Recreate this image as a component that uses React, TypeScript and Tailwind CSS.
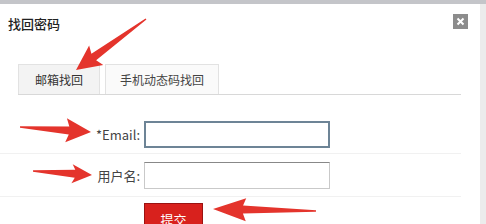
import React from "react";

type Pt = [number, number];

// tapered red annotation arrow, tail -> tip
const arrowPoints = (tail: Pt, tip: Pt, hl: number, hw: number, w0: number, w1: number) => {
  const dx = tip[0] - tail[0];
  const dy = tip[1] - tail[1];
  const len = Math.hypot(dx, dy);
  const ux = dx / len;
  const uy = dy / len;
  const nx = -uy;
  const ny = ux;
  const bx = tip[0] - ux * hl;
  const by = tip[1] - uy * hl;
  const pts: Pt[] = [
    [tail[0] + (nx * w0) / 2, tail[1] + (ny * w0) / 2],
    [bx + (nx * w1) / 2, by + (ny * w1) / 2],
    [bx + (nx * hw) / 2 - ux * 3, by + (ny * hw) / 2 - uy * 3],
    tip,
    [bx - (nx * hw) / 2 - ux * 3, by - (ny * hw) / 2 - uy * 3],
    [bx - (nx * w1) / 2, by - (ny * w1) / 2],
    [tail[0] - (nx * w0) / 2, tail[1] - (ny * w0) / 2],
  ];
  return pts.map((p) => p.join(",")).join(" ");
};

const arrows = [
  { tail: [146, 19] as Pt, tip: [76, 70] as Pt, hl: 22, hw: 24 },
  { tail: [20, 127] as Pt, tip: [91, 132] as Pt, hl: 22, hw: 24 },
  { tail: [33, 171] as Pt, tip: [92, 175] as Pt, hl: 17, hw: 19 },
  { tail: [316, 211] as Pt, tip: [213, 209] as Pt, hl: 30, hw: 23 },
];

export default function App() {
  return (
    <div
      className="relative w-[486px] h-[224px] overflow-hidden bg-white text-[#333]"
      style={{ fontFamily: '"Noto Sans CJK SC", "Liberation Sans", sans-serif' }}
    >
      <div className="h-[4px] bg-[#c4c5c9]" />
      <div className="flex h-[220px]">
        <div className="w-[480px] bg-white">
          {/* header */}
          <div className="flex items-start justify-between pl-[8px] pr-[12px] pt-[10px]">
            <span className="text-[13px] leading-[20px] font-medium text-[#222]">找回密码</span>
            <button className="w-[15px] h-[15px] bg-[#8c8c8c] flex items-center justify-center">
              <svg width="9" height="9" viewBox="0 0 9 9">
                <path d="M1.5 1.5 L7.5 7.5 M7.5 1.5 L1.5 7.5" stroke="#fff" strokeWidth="2" />
              </svg>
            </button>
          </div>

          {/* tabs */}
          <div className="mt-[30px] ml-[18px] mr-[19px] flex items-end border-b border-[#d8d8d8]">
            <div className="w-[82px] h-[30px] bg-[#f3f3f3] border border-b-0 border-[#e2e2e2] flex items-center justify-center text-[12px] text-[#333]">
              邮箱找回
            </div>
            <div className="ml-[5px] w-[114px] h-[30px] bg-[#fafafa] border border-b-0 border-[#e2e2e2] flex items-center justify-center text-[12px] text-[#444]">
              手机动态码找回
            </div>
          </div>

          {/* form */}
          <div className="mt-[26px] mr-[19px]">
            <div className="flex items-center">
              <label className="w-[141px] text-right text-[13px] text-[#444] pr-[1px]">*Email:</label>
              <input className="ml-[3px] w-[186px] h-[27px] border-2 border-[#6d8496] outline-none" />
            </div>
            <div className="mt-[5px] h-px bg-[#f1f1f1]" />
            <div className="mt-[8px] flex items-center">
              <label className="w-[141px] text-right text-[13px] text-[#444] pr-[1px]">用户名:</label>
              <input className="ml-[3px] w-[186px] h-[27px] border border-[#c9c9c9] border-t-[#888] outline-none" />
            </div>
            <div className="mt-[7px] h-px bg-[#f1f1f1]" />
            <div className="mt-[6px] pl-[144px]">
              <button className="w-[59px] h-[28px] pt-[4px] bg-[#d8211d] border border-[#9b1212] text-white text-[13px] leading-none">
                提交
              </button>
            </div>
          </div>
        </div>
        <div className="flex-1 bg-[#ececec]" />
      </div>

      {/* red annotation arrows */}
      <svg className="absolute inset-0 pointer-events-none" width="486" height="224" viewBox="0 0 486 224">
        {arrows.map((a, i) => (
          <polygon key={i} points={arrowPoints(a.tail, a.tip, a.hl, a.hw, 1.5, 8)} fill="#e4342c" />
        ))}
      </svg>
    </div>
  );
}
